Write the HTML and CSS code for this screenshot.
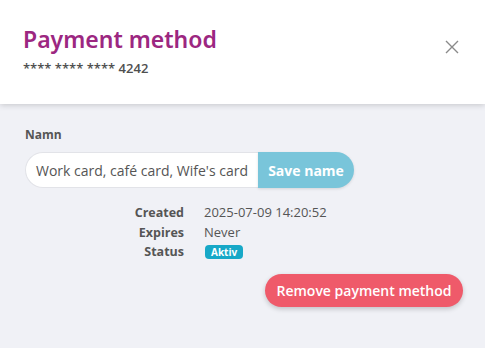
FILE: index.html
```html
<!DOCTYPE html>
<html>
<head>
<meta charset="utf-8">
<link rel="stylesheet" href="styles.css">
</head>
<body>
<div class="modal">
  <header class="head">
    <div class="head-text">
      <h1 class="title">Payment method</h1>
      <div class="masked">**** **** **** 4242</div>
    </div>
    <button class="close" aria-label="Close">
      <svg width="14" height="14" viewBox="0 0 14 14"><path d="M1 1L13 13M13 1L1 13" stroke="#8a8a8a" stroke-width="1.4" fill="none"/></svg>
    </button>
  </header>
  <main class="body">
    <label class="label">Namn</label>
    <div class="name-row">
      <div class="input">Work card, café card, Wife's card</div>
      <button class="save">Save name</button>
    </div>
    <dl class="details">
      <dt>Created</dt><dd>2025-07-09 14:20:52</dd>
      <dt>Expires</dt><dd>Never</dd>
      <dt>Status</dt><dd><span class="badge">Aktiv</span></dd>
    </dl>
    <div class="actions">
      <button class="remove">Remove payment method</button>
    </div>
  </main>
</div>
</body>
</html>
```
FILE: styles.css
```css
* { box-sizing: border-box; }
html, body { margin: 0; padding: 0; }
body {
  width: 485px;
  height: 348px;
  background: #f0f1f6;
  font-family: "Open Sans", "Noto Sans", sans-serif;
  color: #4a4a4a;
  overflow: hidden;
}
.head {
  background: #fff;
  height: 104px;
  display: flex;
  justify-content: space-between;
  align-items: flex-start;
  padding: 24px 26px 0 23px;
  box-shadow: 0 1px 6px rgba(0,0,0,0.18);
  position: relative;
  z-index: 1;
}
.title {
  margin: 0;
  font-family: "Noto Sans", sans-serif;
  font-weight: 600;
  font-size: 23px;
  line-height: 30px;
  color: #9c2781;
}
.masked {
  margin-top: 6px;
  font-size: 13px;
  font-weight: 600;
  color: #4f4f4f;
  line-height: 17px;
}
.close {
  margin-top: 16px;
  background: none;
  border: 0;
  padding: 0;
  width: 14px;
  height: 14px;
  display: flex;
}
.body {
  padding: 23px 22px 0 25px;
}
.label {
  display: block;
  font-size: 12px;
  font-weight: 700;
  color: #555;
  line-height: 16px;
}
.name-row {
  display: flex;
  margin-top: 9px;
  height: 36px;
}
.input {
  width: 233px;
  background: #fff;
  border: 1px solid #e2e3e8;
  border-right: 0;
  border-radius: 18px 0 0 18px;
  padding: 0 10px;
  display: flex;
  align-items: center;
  font-size: 14px;
  color: #555;
  white-space: nowrap;
  overflow: hidden;
}
.save {
  width: 96px;
  border: 0;
  background: #79c5da;
  color: #fff;
  font-family: "Open Sans", sans-serif;
  font-size: 14px;
  font-weight: 700;
  border-radius: 0 18px 18px 0;
  padding: 0;
  box-shadow: 0 1px 3px rgba(0,0,0,0.12);
}
.details {
  display: grid;
  grid-template-columns: 159px auto;
  column-gap: 20px;
  row-gap: 0;
  margin: 15px 0 0 0;
  font-size: 13px;
  line-height: 19.5px;
}
.details dt {
  text-align: right;
  font-weight: 700;
  font-size: 12.5px;
  color: #555;
}
.details dd {
  margin: 0;
  color: #555;
}
.badge {
  display: inline-block;
  background: #17a8c7;
  color: #fff;
  font-size: 10px;
  font-weight: 700;
  line-height: 14px;
  padding: 0 6px;
  border-radius: 4px;
  vertical-align: 0;
  margin-left: 1px;
}
.actions {
  display: flex;
  justify-content: flex-end;
  margin-top: 12px;
}
.remove {
  height: 33px;
  width: 198px;
  border: 0;
  border-radius: 17px;
  background: #ef5a6a;
  color: #fff;
  font-family: "Open Sans", sans-serif;
  font-weight: 600;
  font-size: 14px;
  padding: 0;
  box-shadow: 0 2px 5px rgba(0,0,0,0.2);
}
```
